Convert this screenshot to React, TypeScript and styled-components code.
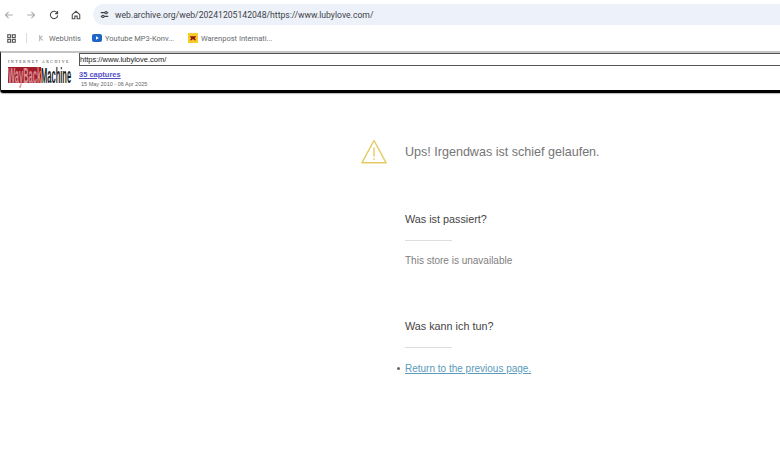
import React from 'react'
import styled, { createGlobalStyle } from 'styled-components'

const Global = createGlobalStyle`
  html, body {
    margin: 0;
    padding: 0;
    background: #fff;
    overflow: hidden;
    font-family: "Liberation Sans", Arial, sans-serif;
  }
`

const App = () => {
  return (
    <Page>
      <Global />
      <NavBar>
        <NavIcons>
          <NavIcon $dim>
            <svg width="10" height="10" viewBox="0 0 12 12"><path d="M10.5 6H2M5.5 2.2 1.700 6l3.800 3.800" /></svg>
          </NavIcon>
          <NavIcon $dim>
            <svg width="10" height="10" viewBox="0 0 12 12"><path d="M1.500 6H10M6.500 2.200 10.300 6 6.500 9.800" /></svg>
          </NavIcon>
          <NavIcon $shift={1}>
            <svg width="10" height="10" viewBox="0 0 12 12"><path d="M10 4a4.400 4.400 0 1 0 .4 2.400M10.300 1.300V4.300H7.300" /></svg>
          </NavIcon>
          <NavIcon>
            <svg width="10" height="10" viewBox="0 0 12 12"><path d="M1.500 5.500 6 1.600l4.500 3.900v5H7.400V7.300H4.600v3.200H1.500z" /></svg>
          </NavIcon>
        </NavIcons>
        <Address>
          <svg width="9" height="9" viewBox="0 0 12 12" fill="none" stroke="#3c4043" strokeWidth="1.400">
            <path d="M1 3.500h5.500M9.500 3.500H11M1 8.500h1.500M5.500 8.500H11" />
            <circle cx="8" cy="3.500" r="1.500" />
            <circle cx="4" cy="8.500" r="1.500" />
          </svg>
          <Url>web.archive.org/web/20241205142048/https://www.lubylove.com/</Url>
        </Address>
      </NavBar>
      <Bookmarks>
        <AppsIcon>
          <svg width="9" height="9" viewBox="0 0 12 12" fill="none" stroke="#555" strokeWidth="1.500">
            <rect x="1" y="1" width="3.800" height="3.800" />
            <rect x="7.200" y="1" width="3.800" height="3.800" />
            <rect x="1" y="7.200" width="3.800" height="3.800" />
            <rect x="7.200" y="7.200" width="3.800" height="3.800" />
          </svg>
        </AppsIcon>
        <BarDivider />
        <Bookmark $width={55}>
          <svg width="9" height="9" viewBox="0 0 10 10" fill="none" stroke="#b5b5b5" strokeWidth="1.200">
            <path d="M3 1v7M3 5l3-3M4 5l2.500 2" />
          </svg>
          WebUntis
        </Bookmark>
        <Bookmark $width={96}>
          <svg width="10" height="8" viewBox="0 0 10 8">
            <rect width="10" height="8" rx="2" fill="#1f66c9" />
            <path d="M4 2.300v3.400L6.800 4z" fill="#fff" />
          </svg>
          Youtube MP3-Konv...
        </Bookmark>
        <Bookmark $width={96}>
          <svg width="10" height="10" viewBox="0 0 11 11">
            <rect width="11" height="11" fill="#f7cc2a" />
            <path d="M2 3.500h7L7.500 6 9 8H7L5.500 6.500 4 8H2l1.500-2z" fill="#8a1a10" />
          </svg>
          Warenpost Internati...
        </Bookmark>
      </Bookmarks>
      <Wayback>
        <Logo>
          <LogoTop>INTERNET ARCHIVE</LogoTop>
          <LogoMark>
            <LogoWord $red>WayBack</LogoWord>
            <LogoWord>Machine</LogoWord>
          </LogoMark>
        </Logo>
        <WaybackInfo>
          <UrlInput>https://www.lubylove.com/</UrlInput>
          <Captures>35 captures</Captures>
          <Dates>15 May 2010 - 06 Apr 2025</Dates>
        </WaybackInfo>
      </Wayback>
      <Main>
        <Headline>
          <WarningSlot>
            <svg width="26" height="25" viewBox="0 0 26 25" fill="none" stroke="#e3ca62" strokeWidth="1.400" strokeLinejoin="round">
              <path d="M13 1.500 1 23.700h24z" />
              <path d="M13 8.500v9M13 19.300v1.700" />
            </svg>
          </WarningSlot>
          <Title>Ups! Irgendwas ist schief gelaufen.</Title>
        </Headline>
        <Section>
          <SectionTitle>Was ist passiert?</SectionTitle>
          <Rule />
          <Body>This store is unavailable</Body>
        </Section>
        <Section>
          <SectionTitle>Was kann ich tun?</SectionTitle>
          <Rule />
          <Actions>
            <li><BackLink href="#">Return to the previous page.</BackLink></li>
          </Actions>
        </Section>
      </Main>
    </Page>
  )
}

export default App

const Page = styled.div`
  width: 780px;
  height: 463px;
  overflow: hidden;
  background: #fff;
`

const NavBar = styled.div`
  height: 26px;
  padding-top: 4px;
  box-sizing: border-box;
  display: flex;
`

const NavIcons = styled.div`
  width: 93px;
  padding-left: 3px;
  box-sizing: border-box;
  display: flex;
  gap: 10px;
`

const NavIcon = styled.span<{ $dim?: boolean; $shift?: number }>`
  width: 12px;
  height: 22px;
  margin-left: ${p => p.$shift || 0}px;
  display: flex;
  align-items: center;
  justify-content: center;
  svg {
    fill: none;
    stroke: ${p => (p.$dim ? '#a9acb0' : '#4a4d50')};
    stroke-width: 1.300;
  }
`

const Address = styled.div`
  flex: 1;
  height: 21px;
  background: #edf1fa;
  border-radius: 11px 0 0 11px;
  padding-left: 7px;
  display: flex;
  align-items: center;
  gap: 6px;
`

const Url = styled.span`
  font-family: "Roboto", "Liberation Sans", sans-serif;
  font-size: 8.650px;
  color: #3f4246;
`

const Bookmarks = styled.div`
  height: 24px;
  padding: 0 0 1px 7px;
  display: flex;
  align-items: center;
`

const AppsIcon = styled.span`
  display: flex;
  width: 9px;
`

const BarDivider = styled.span`
  width: 1px;
  height: 10px;
  margin: 0 10px;
  background: #dcdcdc;
`

const Bookmark = styled.span<{ $width: number }>`
  width: ${p => p.$width}px;
  display: flex;
  align-items: center;
  gap: 3px;
  font-family: "Roboto", "Liberation Sans", sans-serif;
  font-size: 7.500px;
  color: #666a6e;
  white-space: nowrap;
`

const Wayback = styled.div`
  height: 42px;
  box-sizing: border-box;
  border-top: 2px solid #c4c4c4;
  border-bottom: 3px solid #000;
  border-left: 1px solid #222;
  border-bottom-left-radius: 3px;
  display: flex;
  box-shadow: 0 1px 1px #bbb;
`

const Logo = styled.div`
  width: 78px;
  flex-shrink: 0;
  padding: 6px 0 0 7px;
  box-sizing: border-box;
`

const LogoTop = styled.div`
  font-family: "Liberation Serif", serif;
  font-size: 4px;
  letter-spacing: 1.500px;
  color: #333;
  white-space: nowrap;
`

const LogoMark = styled.div`
  display: inline-flex;
  margin-top: 1px;
  height: 11px;
  transform-origin: left top;
  transform: scale(0.5, 1.450);
`

const LogoWord = styled.span<{ $red?: boolean }>`
  font-family: "Liberation Sans", sans-serif;
  font-weight: 700;
  font-size: 15px;
  line-height: 11px;
  color: ${p => (p.$red ? '#d98d92' : '#1b1b1b')};
  background: ${p => (p.$red ? '#a01c28' : 'transparent')};
  white-space: nowrap;
`

const WaybackInfo = styled.div`
  flex: 1;
  min-width: 0;
`

const UrlInput = styled.div`
  height: 10px;
  box-sizing: content-box;
  border: 1px solid #555;
  border-right: none;
  padding-top: 1px;
  font-size: 7.500px;
  line-height: 10px;
  color: #222;
`

const Captures = styled.div`
  margin: 4px 0 0;
  font-size: 7.500px;
  line-height: 10px;
  font-weight: 700;
  color: #5552c8;
  text-decoration: underline;
`

const Dates = styled.div`
  margin: 1px 0 0 2px;
  font-size: 5.500px;
  line-height: 7px;
  color: #666;
`

const Main = styled.main`
  padding: 46px 0 0 361px;
`

const Headline = styled.div`
  display: flex;
  align-items: center;
  height: 25px;
`

const WarningSlot = styled.span`
  width: 44px;
  display: flex;
`

const Title = styled.h1`
  margin: 0;
  font-size: 12.550px;
  font-weight: 400;
  color: #757575;
`

const Section = styled.section`
  margin-left: 44px;
  margin-top: 49px;
  & + & {
    margin-top: 53px;
  }
`

const SectionTitle = styled.h2`
  margin: 0;
  font-size: 10.800px;
  line-height: 13px;
  font-weight: 400;
  color: #444;
`

const Rule = styled.div`
  width: 47px;
  height: 1px;
  margin-top: 14px;
  background: #dedede;
`

const Body = styled.p`
  margin: 13px 0 0;
  font-size: 10px;
  line-height: 13px;
  color: #808080;
`

const Actions = styled.ul`
  margin: 14px 0 0 -8px;
  padding: 0;
  list-style: none;
  font-size: 10px;
  line-height: 13px;
  li {
    display: flex;
    align-items: center;
    gap: 5px;
  }
  li::before {
    content: '';
    width: 3px;
    height: 3px;
    border-radius: 50%;
    background: #666;
  }
`

const BackLink = styled.a`
  color: #5a9abb;
  text-decoration: underline;
`
